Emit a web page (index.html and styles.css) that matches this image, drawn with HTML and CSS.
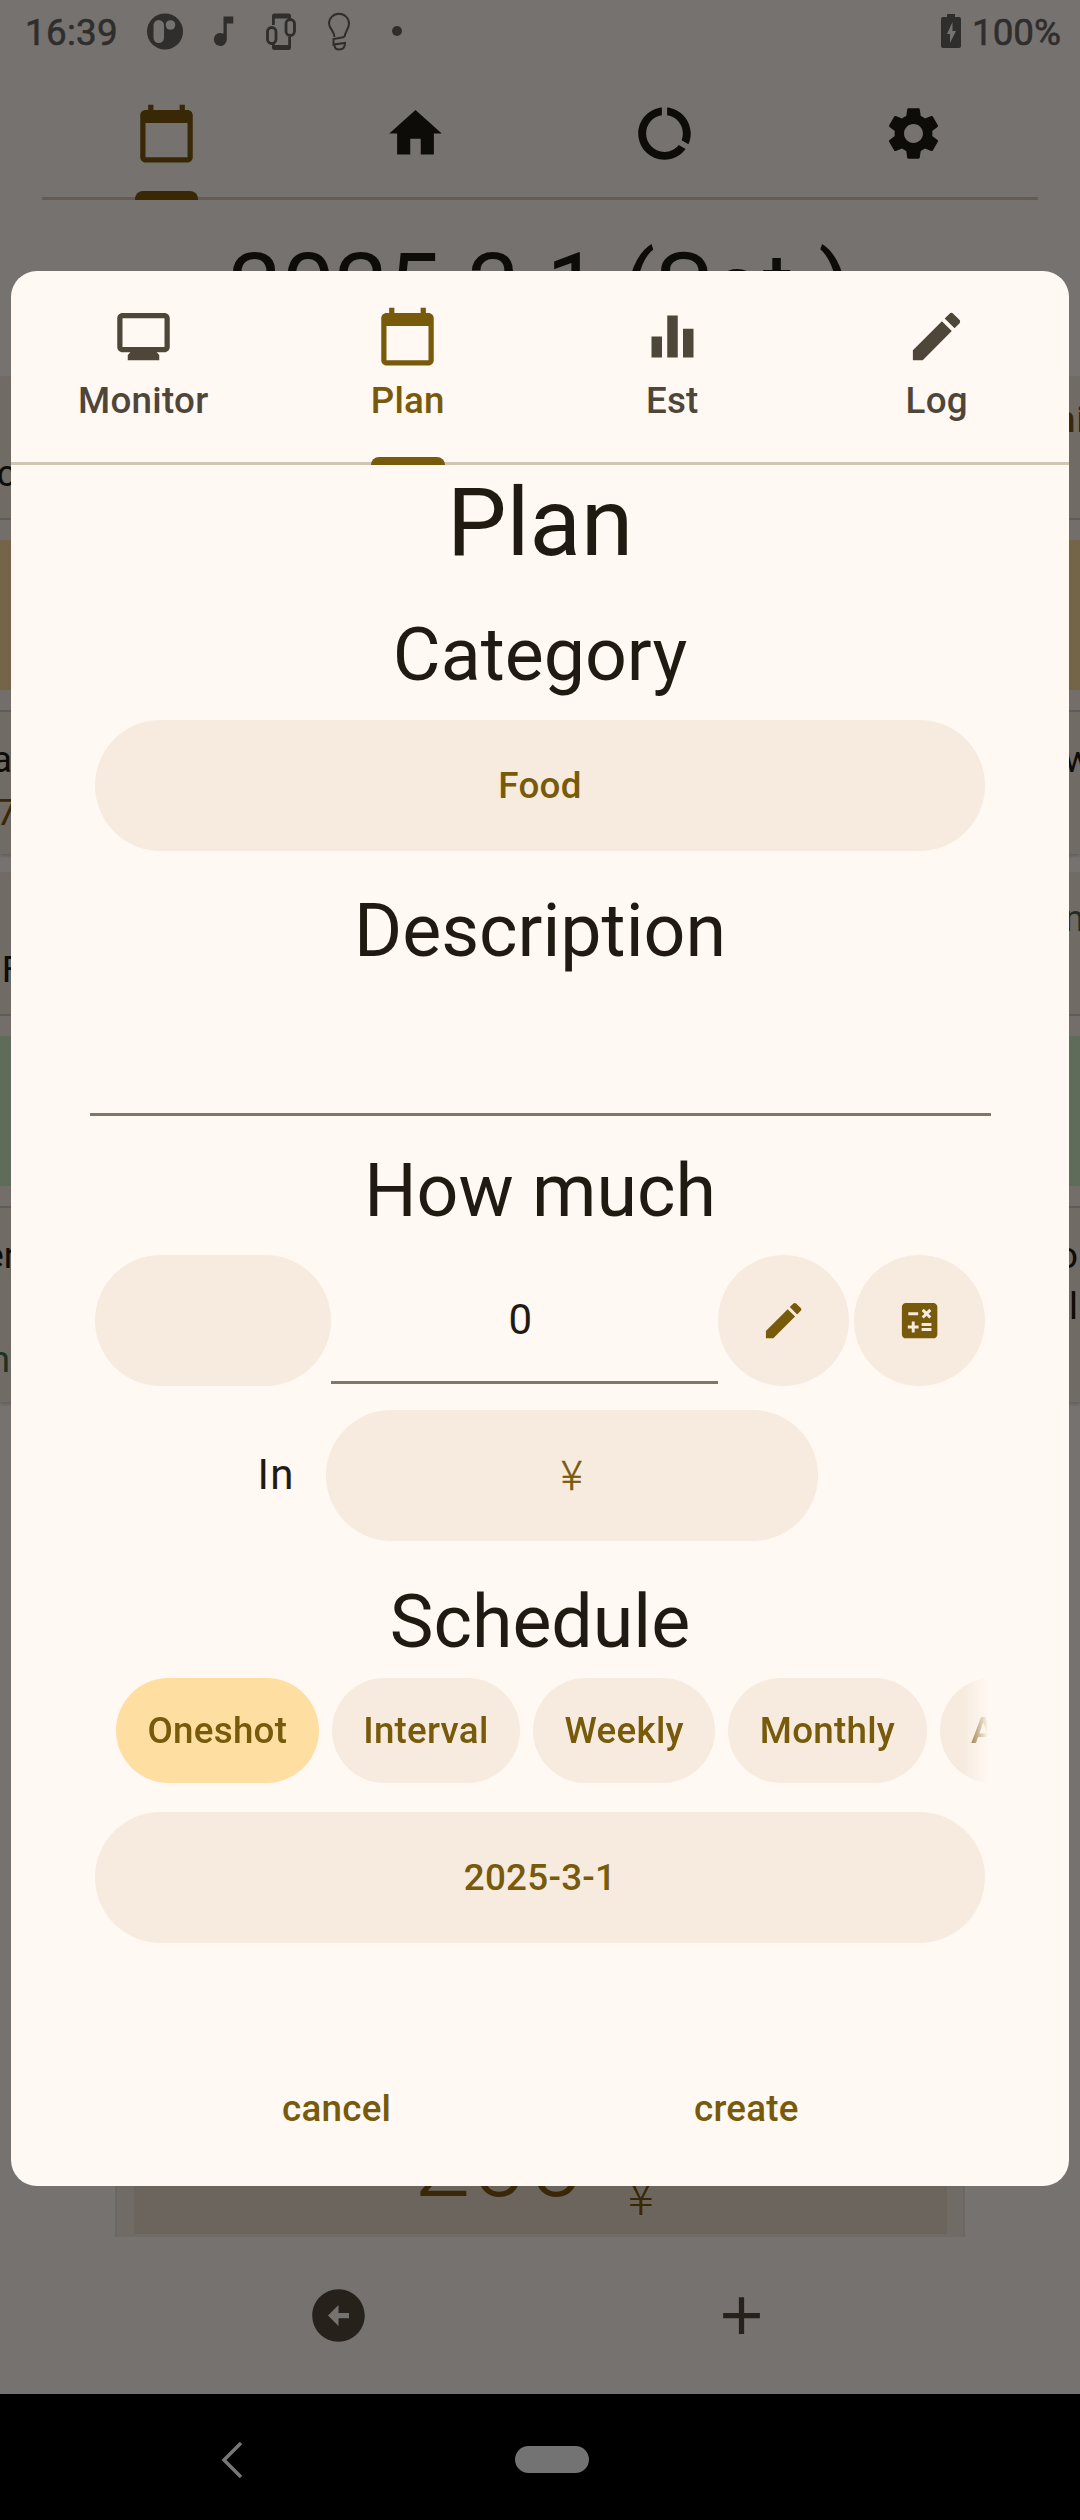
FILE: index.html
```html
<!DOCTYPE html>
<html lang="en">
<head>
<meta charset="utf-8">
<title>Plan</title>
<link rel="stylesheet" href="styles.css">
</head>
<body>
<svg class="defs" width="0" height="0">
  <symbol id="calendar" viewBox="0 0 24 24"><path d="M20 3h-1V1h-2v2H7V1H5v2H4c-1.1 0-2 .9-2 2v16c0 1.1.9 2 2 2h16c1.1 0 2-.9 2-2V5c0-1.1-.9-2-2-2zm0 18H4V8h16v13z"/></symbol>
  <symbol id="edit" viewBox="0 0 24 24"><path d="M3 17.25V21h3.75L17.81 9.94l-3.75-3.75L3 17.25zM20.71 7.04c.39-.39.39-1.02 0-1.41l-2.34-2.34c-.39-.39-1.02-.39-1.41 0l-1.83 1.83 3.75 3.75 1.83-1.83z"/></symbol>
</svg>
<div class="screen">
  <div class="app">
    <header class="status">
      <span class="clock">16:39</span>
      <svg class="notif" viewBox="0 0 264 44">
        <circle cx="33" cy="28.500" r="18"/>
        <g class="cutout"><rect x="21.500" y="17" width="10.500" height="23" rx="5.250"/><circle cx="38.500" cy="22" r="4.800"/></g>
        <path d="M91.500 13.500h9.800v7h-6.500v16a6.500 6.500 0 1 1-3.300-5.700z"/>
        <g fill="none" stroke="currentColor" stroke-width="2.800"><path d="M141.400 22V14M157.600 16v-2M141.400 40v5M157.600 34v11"/><rect x="135.500" y="24.500" width="8.500" height="16" rx="4.200"/><rect x="154" y="16.500" width="8.500" height="16" rx="4.200"/></g>
        <path d="M140 15.500V13q0-2.500 2.500-2.500h14Q159 10.500 159 13v2.500zM140 42v2.500q0 2.500 2.500 2.500h14q2.500 0 2.500-2.500V42z"/>
        <g fill="none" stroke="currentColor" stroke-width="2"><path d="M202.500 34c0-6-5.500-8.500-5.500-13.500a10 9.700 0 0 1 20 0c0 5.500-4 8-4.500 13.500"/><path d="M212.500 34l-11 2v5.500l11.500-1.500q0 6.500-6 6.500-4.500 0-4.500-4.500"/></g>
        <circle cx="265" cy="28" r="5"/>
      </svg>
      <svg class="battery" viewBox="0 0 20 34"><path fill-rule="evenodd" d="M6 0h8v3h4q2 0 2 2v27q0 2-2 2H2q-2 0-2-2V5q0-2 2-2h4zM11.500 8L6 20h3v9l6-12h-3.500z"/></svg>
      <span class="percent">100%</span>
    </header>
    <nav class="topnav">
      <div class="topnav-item active"><svg class="icon"><use href="#calendar"/></svg></div>
      <div class="topnav-item"><svg class="icon" viewBox="0 0 24 24"><path d="M10 20v-6h4v6h5v-8h3L12 3 2 12h3v8z"/></svg></div>
      <div class="topnav-item"><svg class="icon" viewBox="0 0 24 24"><path d="M13 2.050v3.030c3.390.49 6 3.390 6 6.920 0 .9-.18 1.750-.48 2.540l2.600 1.530c.56-1.240.88-2.620.88-4.070 0-5.180-3.950-9.450-9-9.950zM12 19c-3.870 0-7-3.130-7-7 0-3.530 2.610-6.430 6-6.920V2.050c-5.060.5-9 4.760-9 9.950 0 5.520 4.470 10 9.990 10 3.310 0 6.240-1.610 8.060-4.090l-2.600-1.530C16.170 17.980 14.210 19 12 19z"/></svg></div>
      <div class="topnav-item"><svg class="icon" viewBox="0 0 24 24"><path d="M19.140 12.940c.04-.3.060-.61.060-.94 0-.32-.02-.64-.07-.94l2.030-1.580c.18-.14.23-.41.120-.61l-1.920-3.320c-.12-.22-.37-.29-.59-.22l-2.390.96c-.5-.38-1.030-.7-1.620-.94l-.36-2.540c-.04-.24-.24-.41-.48-.41h-3.840c-.24 0-.43.170-.47.410l-.36 2.540c-.59.240-1.130.570-1.620.940l-2.390-.96c-.22-.08-.47 0-.59.220L2.740 8.870c-.12.210-.08.470.120.610l2.030 1.580c-.05.3-.09.630-.09.940s.02.640.070.940l-2.030 1.580c-.18.140-.23.410-.12.610l1.920 3.320c.12.220.37.290.59.220l2.390-.96c.5.380 1.030.7 1.620.94l.36 2.540c.05.240.24.410.48.410h3.840c.24 0 .44-.17.470-.41l.36-2.540c.59-.24 1.130-.56 1.620-.94l2.390.96c.22.080.47 0 .59-.22l1.920-3.320c.12-.22.070-.47-.12-.61l-2.010-1.580zM12 15.600c-1.980 0-3.600-1.620-3.600-3.600s1.620-3.600 3.600-3.600 3.600 1.620 3.600 3.600-1.620 3.600-3.600 3.600z"/></svg></div>
    </nav>
    <h1 class="date">2025-3-1 (Sat.)</h1>
    <section class="entry">
      <div class="entry-head"><span class="left l1">c</span><span class="right r1 gold">ni</span></div>
      <div class="entry-mid"><div class="band tan"></div></div>
      <div class="entry-foot"><span class="left l2">a</span><span class="left l3 gold">7</span><span class="right r2">w</span></div>
    </section>
    <section class="entry second">
      <div class="entry-head"><span class="left l4">F</span><span class="right r3 green">n</span></div>
      <div class="entry-mid"><div class="band mint"></div></div>
      <div class="entry-foot"><span class="left l5">en</span><span class="left l6 green">n</span><span class="right r4">o</span><span class="right r5">l</span></div>
    </section>
    <section class="total"><div class="total-inner"><span class="amount">200</span><span class="unit">¥</span></div></section>
    <footer class="actions">
      <svg class="icon" viewBox="0 0 24 24"><path fill-rule="evenodd" d="M22 12c0-5.520-4.480-10-10-10S2 6.480 2 12s4.480 10 10 10 10-4.480 10-10zM12 13v3l-4-4 4-4v3h4v2z"/></svg>
      <svg class="icon" viewBox="0 0 24 24"><path d="M19 13h-6v6h-2v-6H5v-2h6V5h2v6h6z"/></svg>
    </footer>
    <div class="sysnav">
      <svg class="back" viewBox="0 0 22 36"><path d="M20 1L3 18l17 17"/></svg>
      <div class="home-pill"></div>
    </div>
  </div>

  <main class="dialog">
    <nav class="tabs">
      <div class="tab"><svg class="icon" viewBox="0 0 24 24"><path d="M20 3H4c-1.100 0-2 .9-2 2v11c0 1.100.9 2 2 2h3l-1 1v2h12v-2l-1-1h3c1.100 0 2-.9 2-2V5c0-1.100-.9-2-2-2zm0 13H4V5h16v11z"/></svg><span>Monitor</span></div>
      <div class="tab active"><svg class="icon"><use href="#calendar"/></svg><span>Plan</span></div>
      <div class="tab"><svg class="icon" viewBox="0 0 24 24"><path d="M10 20h4V4h-4v16zm-6 0h4v-8H4v8zM16 9v11h4V9h-4z"/></svg><span>Est</span></div>
      <div class="tab"><svg class="icon"><use href="#edit"/></svg><span>Log</span></div>
    </nav>
    <div class="form">
      <h2 class="title">Plan</h2>
      <h3 class="label category-label">Category</h3>
      <button class="pill wide">Food</button>
      <h3 class="label description-label">Description</h3>
      <div class="text-field"></div>
      <h3 class="label amount-label">How much</h3>
      <div class="amount-row">
        <button class="pill sign"></button>
        <div class="amount-field">0</div>
        <button class="pill round"><svg class="small-icon"><use href="#edit"/></svg></button>
        <button class="pill round last"><svg class="small-icon" viewBox="0 0 24 24"><path fill-rule="evenodd" d="M19 3H5c-1.100 0-2 .9-2 2v14c0 1.100.9 2 2 2h14c1.100 0 2-.9 2-2V5c0-1.100-.9-2-2-2zm-5.970 4.060L14.090 6l1.410 1.410L16.910 6l1.060 1.060-1.410 1.410 1.410 1.410-1.060 1.060-1.410-1.400-1.410 1.410-1.060-1.060 1.410-1.410-1.410-1.420zM6.250 7.720h5v1.500h-5v-1.500zM11.500 16h-2v2H8v-2H6v-1.500h2v-2h1.500v2h2V16zm6.500 1.250h-5v-1.500h5v1.500zm0-2.500h-5v-1.500h5v1.500z"/></svg></button>
      </div>
      <div class="currency-row"><span class="in">In</span><button class="pill currency">¥</button></div>
      <h3 class="label schedule-label">Schedule</h3>
      <div class="chips">
        <button class="chip selected">Oneshot</button><button class="chip">Interval</button><button class="chip">Weekly</button><button class="chip">Monthly</button><button class="chip">Annual</button>
      </div>
      <button class="pill wide">2025-3-1</button>
      <div class="buttons"><span class="cancel">cancel</span><span class="create">create</span></div>
    </div>
  </main>
</div>
</body>
</html>
```
FILE: styles.css
```css
* { box-sizing: border-box; }
body { margin: 0; font-family: Roboto, "Noto Sans CJK JP", sans-serif; }
h1, h2, h3 { margin: 0; font-weight: 400; }
button { border: 0; padding: 0; font: inherit; letter-spacing: inherit; color: inherit; }
svg { display: block; fill: currentColor; }
.defs { position: absolute; }
.icon { width: 63px; height: 63px; flex: none; }

.screen { position: relative; width: 1080px; height: 2520px; overflow: hidden; background: #767270; }
.app { display: flex; flex-direction: column; height: 2520px; color: #0d0c08; }

/* status bar */
.status { height: 102px; flex: none; display: flex; align-items: flex-start; padding: 11px 17px 0 25px; font-size: 36.75px; line-height: 43px; color: #2f2e2c; -webkit-text-stroke: .6px currentColor; }
.clock { width: 107px; letter-spacing: .3px; }
.notif { width: 264px; height: 44px; margin-top: -8px; overflow: visible; }
.cutout { fill: #767270; }
.battery { width: 20px; height: 34px; margin: 3px 11px 0 auto; }
.percent { width: 91px; }

.topnav { height: 98px; flex: none; margin: 0 42px; display: flex; border-bottom: 3px solid #645c52; }
.topnav-item { flex: 1; height: 98px; display: flex; flex-direction: column; align-items: center; justify-content: space-between; }
.topnav-item.active { color: #382806; }
.active::after { content: ""; background: currentColor; border-radius: 8px 8px 0 0; height: 8px; flex: none; }
.topnav-item.active::after { width: 63px; height: 9px; }

.date { height: 176px; flex: none; padding-top: 33px; text-align: center; font-size: 94.5px; line-height: 110px; }

/* ledger entries visible around the dialog */
.entry { flex: none; height: 478px; background: #706b65; box-shadow: 0 2px 3px #625e5b; font-size: 36.75px; line-height: 43px; }
.entry.second { margin-top: 18px; height: 530px; }
.entry-head { height: 142px; position: relative; }
.entry-mid { height: 194px; padding: 20px 0; border: solid #5f5b56; border-width: 2px 0; background: #736e69; }
.band { height: 150px; }
.tan { background: #756548; }
.mint { background: #5f6c59; }
.entry-foot { height: 142px; position: relative; }
.left, .right { position: absolute; }
.left { right: 1068px; }
.right { left: 1064px; }
.gold { color: #382806; }
.green { color: #213021; }
.left.l1 { top: 76px; right: 1064px; }
.right.r1 { top: 22px; left: 1055px; letter-spacing: 1px; font-weight: 500; }
.left.l2 { top: 26px; }
.left.l3 { top: 79px; right: 1063px; }
.right.r2 { top: 26px; }
.left.l4 { top: 76px; right: 1058px; }
.right.r3 { top: 25px; }
.left.l5 { top: 26px; right: 1056px; }
.left.l6 { top: 130px; right: 1070px; }
.right.r4 { top: 26px; left: 1057px; }
.right.r5 { top: 77px; left: 1069px; }

.total { flex: none; width: 850px; height: 137px; margin: 698px auto 0; padding: 0 16.500px 3px; background: #706b65; border: solid #6b6762; border-width: 0 2px; }
.total-inner { height: 134px; background: #6b655d; color: #382806; display: flex; align-items: flex-start; padding: 0 0 0 280px; }
.amount { font-weight: 300; font-size: 103px; line-height: 121px; width: 214px; }
.unit { font-family: "Noto Sans CJK JP", sans-serif; font-weight: 300; font-size: 50px; line-height: 60px; padding-top: 63px; }

.actions { flex: none; height: 157px; display: flex; align-items: center; justify-content: space-between; padding: 0 307.500px 0 306.500px; color: #26221b; }
.sysnav { flex: none; height: 126px; background: #000; display: flex; align-items: center; padding: 5px 0 0 221px; }
.back { width: 22px; height: 36px; fill: none; stroke: #777; stroke-width: 3.500; }
.home-pill { width: 74px; height: 27px; margin-left: 272px; border-radius: 14px; background: #737373; }

/* dialog */
.dialog { position: absolute; left: 11px; top: 271px; width: 1058px; height: 1915px; border-radius: 26px; background: #fff8f3; overflow: hidden; color: #1f1b13; }
.tabs { display: flex; height: 194px; border-bottom: 3px solid #d2c5b4; }
.tab { flex: 1; height: 194px; display: flex; flex-direction: column; align-items: center; padding-top: 33.500px; color: #4e4639; font-size: 36.75px; font-weight: 500; line-height: 43px; letter-spacing: .26px; }
.tab span { margin-top: 11px; }
.tab.active { color: #785a0b; }
.tab.active::after { width: 74px; margin-top: auto; }

.form { display: flex; flex-direction: column; padding: 0 84px; font-size: 36.75px; letter-spacing: .26px; }
.title { height: 116px; line-height: 116px; font-size: 94.5px; letter-spacing: 0; text-align: center; }
.label { font-size: 73.500px; line-height: 94px; height: 94px; letter-spacing: 0; text-align: center; flex: none; }
.category-label { margin: 27px 0 18px; }
.description-label { margin: 33px 0 0; }
.pill { flex: none; height: 131px; border-radius: 66px; background: #f7ebdf; color: #785a0b; font-weight: 500; }
.wide { width: 890px; }
.text-field { width: 901px; height: 138px; margin-left: -5.500px; border-bottom: 3px solid #80766a; }
.amount-label { margin: 28px 0 17px; }
.amount-row { display: flex; height: 131px; }
.sign { width: 236px; }
.amount-field { width: 387px; height: 129px; padding-right: 8px; border-bottom: 3px solid #80766a; text-align: center; font-size: 42px; line-height: 129px; }
.round { width: 131px; display: flex; align-items: center; justify-content: center; }
.round.last { margin-left: 5px; }
.small-icon { width: 47.250px; height: 47.250px; }
.currency-row { display: flex; align-items: center; height: 131px; margin-top: 24px; padding-left: 162.500px; }
.in { width: 68px; font-size: 42px; line-height: 50px; margin-top: -2px; letter-spacing: 1.300px; }
.currency { width: 492.500px; padding-bottom: 7px; font-family: "Noto Sans CJK JP", sans-serif; font-size: 41px; font-weight: 300; -webkit-text-stroke: .5px currentColor; }
.schedule-label { margin: 34px 0 9px; }
.chips { display: flex; gap: 13px; height: 105px; margin: 0 -5px 29px; padding-left: 26px; overflow: hidden; -webkit-mask-image: linear-gradient(to right, #000 874px, transparent 898px); mask-image: linear-gradient(to right, #000 874px, transparent 898px); }
.chip { flex: none; height: 105px; padding: 0 31.500px; border-radius: 53px; background: #f7ebdf; color: #785a0b; font-weight: 500; }
.chip.selected { background: #ffdea1; }
.buttons { display: flex; margin-top: 144px; line-height: 44px; color: #785a0b; font-weight: 500; padding-left: 187px; }
.cancel { width: 412px; }
```
